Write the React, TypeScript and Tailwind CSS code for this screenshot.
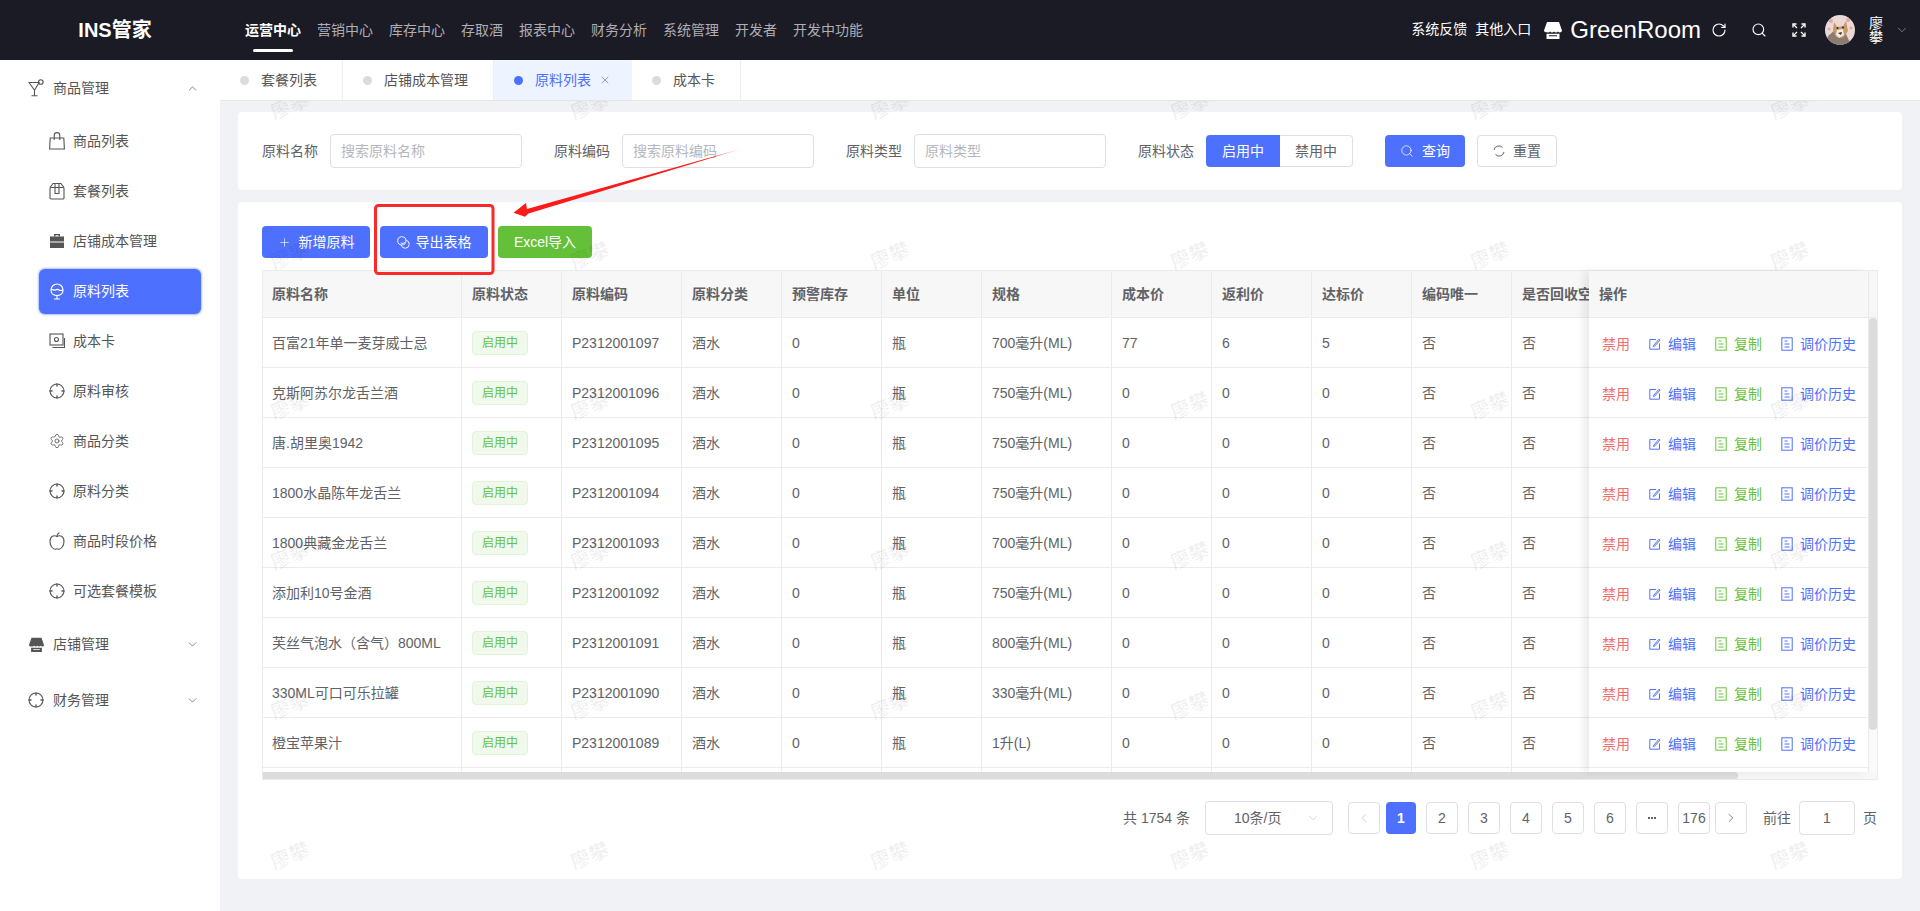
import { ChevronDown, ChevronLeft, ChevronRight, ChevronUp, Plus, RotateCw, Search, Settings, X } from "lucide-react";
import type { ReactNode } from "react";

const FONT = "font-['Liberation_Sans','Noto_Sans_CJK_SC',sans-serif]";

/* ---------- drawn icons ---------- */

function Cocktail({ className = "" }: { className?: string }) {
  return (
    <svg viewBox="0 0 16 18" className={className} fill="none" stroke="currentColor" strokeWidth="1.1">
      <path d="M1 3.5h10L7 10.5h-1z" />
      <path d="M6.5 10.5v6M3.5 16.7h6" />
      <circle cx="12.8" cy="3" r="2.3" />
    </svg>
  );
}

function Bag({ className = "" }: { className?: string }) {
  return (
    <svg viewBox="0 0 16 18" className={className} fill="none" stroke="currentColor" strokeWidth="1.1">
      <path d="M1.2 6h13.6l.6 11H.6z" />
      <path d="M5.2 8V3.4a2.8 2.8 0 0 1 5.6 0V8" />
    </svg>
  );
}

function Box({ className = "" }: { className?: string }) {
  return (
    <svg viewBox="0 0 16 18" className={className} fill="none" stroke="currentColor" strokeWidth="1.1">
      <rect x="1" y="5.5" width="14" height="11.5" rx="1" />
      <path d="M1 5.5 4 1.5h8l3 4M6 1.5v10h4v-10" />
    </svg>
  );
}

function Case({ className = "" }: { className?: string }) {
  return (
    <svg viewBox="0 0 16 16" className={className} fill="currentColor">
      <path d="M5 1h6v2.500H9.600V2.200H6.400v1.300H5z" />
      <rect x="1" y="3.500" width="14" height="5" />
      <rect x="1" y="9.500" width="14" height="5.500" />
    </svg>
  );
}

function Goblet({ className = "" }: { className?: string }) {
  return (
    <svg viewBox="0 0 16 18" className={className} fill="none" stroke="currentColor" strokeWidth="1.2">
      <path d="M2 8a6 6 0 0 1 12 0c0 3.500-2.700 5.500-6 5.500S2 11.500 2 8z" />
      <path d="M2 8c2-1.500 3 1 4.500 0s2-1 3.500 0 2.500.500 4 0" />
      <path d="M8 13.500V17M5 17h6" />
    </svg>
  );
}

function Card({ className = "" }: { className?: string }) {
  return (
    <svg viewBox="0 0 16 16" className={className} fill="none" stroke="currentColor" strokeWidth="1.1">
      <rect x="1" y="1" width="13" height="11" />
      <circle cx="7.500" cy="6.500" r="2" />
      <path d="M3.500 14.500H15.500V5" />
    </svg>
  );
}

function Target({ className = "" }: { className?: string }) {
  return (
    <svg viewBox="0 0 16 16" className={className} fill="none" stroke="currentColor" strokeWidth="1.1">
      <circle cx="8" cy="8" r="7" />
      <path d="M8 .5v3M8 12.500v3M.5 8h3M12.500 8h3" strokeWidth="1.400" />
    </svg>
  );
}

function Apple({ className = "" }: { className?: string }) {
  return (
    <svg viewBox="0 0 16 18" className={className} fill="none" stroke="currentColor" strokeWidth="1.1">
      <path d="M8 4.500C5 2.800 1 4 1 9.500 1 14 4 17.200 6 17.200c1 0 1.300-.4 2-.4s1 .4 2 .4c2 0 5-3.200 5-7.700 0-5.500-4-6.700-7-5z" />
      <path d="M8 4.500C8 3 8.800 1.500 10.500.8" />
    </svg>
  );
}

function Store({ className = "" }: { className?: string }) {
  return (
    <svg viewBox="0 0 18 18" className={className} fill="currentColor">
      <path d="M3 1h12l3 8.500c0 1.300-1.200 2-2.200 2-.8 0-1.500-.4-1.900-1-.4.600-1.100 1-1.900 1s-1.500-.4-2-1c-.5.600-1.200 1-2 1s-1.500-.4-1.900-1c-.4.600-1.100 1-1.900 1C1.200 11.500 0 10.800 0 9.500z" />
      <path d="M2.500 12.800h13V18h-13zM5 14.300v1h8v-1z" fillRule="evenodd" />
    </svg>
  );
}

function EditIcon() {
  return (
    <svg viewBox="0 0 12 12" className="h-[12px] w-[12px] shrink-0" fill="none" stroke="currentColor" strokeWidth="1">
      <path d="M7 1.500H.8v9.700h9.700V5.500" />
      <path d="M4.500 7.500 10 1.200l1 .9-5.300 6-1.400.3z" />
    </svg>
  );
}

function DocIcon() {
  return (
    <svg viewBox="0 0 12 14" className="h-[14px] w-[12px] shrink-0" fill="none" stroke="currentColor" strokeWidth="1">
      <rect x=".8" y=".8" width="10.400" height="12.400" />
      <path d="M3.500 4h3M3.500 7h5M3.500 10h5" />
    </svg>
  );
}

function Expand() {
  return (
    <svg viewBox="0 0 14 14" className="h-[14px] w-[14px]" fill="none" stroke="currentColor" strokeWidth="1.400">
      <path d="M1 4.500V1h3.500M9.500 1H13v3.500M1 9.500V13h3.500M9.500 13H13V9.500" />
      <path d="M1.500 1.500 5 5M12.500 1.500 9 5M1.500 12.500 5 9M12.500 12.500 9 9" strokeWidth="1.200" />
    </svg>
  );
}

function Link2() {
  return (
    <svg viewBox="0 0 14 14" className="h-[13px] w-[13px]" fill="none" stroke="currentColor" strokeWidth="1">
      <circle cx="5.200" cy="5.200" r="4.400" />
      <path d="M4 7.500c1.500 1 3.500.500 4.500-1" />
      <path d="M9.800 4.500a4.400 4.400 0 1 1-5.300 5.300" />
    </svg>
  );
}

function Refresh() {
  return (
    <svg viewBox="0 0 12 12" className="h-[12px] w-[12px]" fill="none" stroke="currentColor" strokeWidth="1">
      <path d="M1 5A5 5 0 0 1 9.500 2.400" />
      <path d="M11 7A5 5 0 0 1 2.500 9.600" />
    </svg>
  );
}

function Avatar() {
  return (
    <svg viewBox="0 0 30 30" className="h-[30px] w-[30px] shrink-0 rounded-full">
      <rect width="30" height="30" fill="#ead9d6" />
      <circle cx="6" cy="6" r="2" fill="#e2a9a4" />
      <circle cx="23" cy="5" r="2" fill="#e2a9a4" />
      <circle cx="26" cy="13" r="1.600" fill="#e2a9a4" />
      <circle cx="4" cy="14" r="1.600" fill="#e2a9a4" />
      <path d="M0 30 3 21 10 15 21 19 26 30z" fill="#8b7b70" />
      <path d="M9 7 12 12 18 11 21 6 23 16 18 23 11 22 8 15z" fill="#c99a66" />
      <path d="M12 15 18 14 19 20 14 23 11 20z" fill="#f4ece2" />
      <circle cx="12.500" cy="13" r="1" fill="#2b2020" />
      <circle cx="18" cy="12.500" r="1" fill="#2b2020" />
      <path d="M13 18 17 17 16 20z" fill="#3a2a2a" />
    </svg>
  );
}

/* ---------- data ---------- */

const NAV = ["营销中心", "库存中心", "存取酒", "报表中心", "财务分析", "系统管理", "开发者", "开发中功能"];

const MENU: { label: string; icon: ReactNode; active?: boolean }[] = [
  { label: "商品列表", icon: <Bag className="h-[18px] w-[16px]" /> },
  { label: "套餐列表", icon: <Box className="h-[18px] w-[16px]" /> },
  { label: "店铺成本管理", icon: <Case className="h-[16px] w-[16px]" /> },
  { label: "原料列表", icon: <Goblet className="h-[18px] w-[16px]" />, active: true },
  { label: "成本卡", icon: <Card className="h-[16px] w-[16px]" /> },
  { label: "原料审核", icon: <Target className="h-[16px] w-[16px]" /> },
  { label: "商品分类", icon: <Settings size={18} strokeWidth={1.2} /> },
  { label: "原料分类", icon: <Target className="h-[16px] w-[16px]" /> },
  { label: "商品时段价格", icon: <Apple className="h-[18px] w-[16px]" /> },
  { label: "可选套餐模板", icon: <Target className="h-[16px] w-[16px]" /> },
];

const HEADERS = ["原料名称", "原料状态", "原料编码", "原料分类", "预警库存", "单位", "规格", "成本价", "返利价", "达标价", "编码唯一", "是否回收空瓶"];

const ROWS = [
  ["百富21年单一麦芽威士忌", "P2312001097", "700毫升(ML)", "77", "6", "5"],
  ["克斯阿苏尔龙舌兰酒", "P2312001096", "750毫升(ML)", "0", "0", "0"],
  ["唐.胡里奥1942", "P2312001095", "750毫升(ML)", "0", "0", "0"],
  ["1800水晶陈年龙舌兰", "P2312001094", "750毫升(ML)", "0", "0", "0"],
  ["1800典藏金龙舌兰", "P2312001093", "700毫升(ML)", "0", "0", "0"],
  ["添加利10号金酒", "P2312001092", "750毫升(ML)", "0", "0", "0"],
  ["芙丝气泡水（含气）800ML", "P2312001091", "800毫升(ML)", "0", "0", "0"],
  ["330ML可口可乐拉罐", "P2312001090", "330毫升(ML)", "0", "0", "0"],
  ["橙宝苹果汁", "P2312001089", "1升(L)", "0", "0", "0"],
];

const GRID = "grid w-[1669px] grid-cols-[199px_100px_120px_100px_100px_100px_130px_100px_100px_100px_100px_120px]";
const CELL = "flex items-center whitespace-nowrap border-r border-b border-[#ebebeb] px-[10px] first:pl-[9px]";

/* ---------- parts ---------- */

function Header() {
  return (
    <header className="flex h-[60px] shrink-0 items-center bg-[#1a1b25] text-sm">
      <div className="w-[230px] shrink-0 text-center text-[20px] font-bold text-white">INS管家</div>
      <nav className="ml-[15px] flex h-full items-center gap-4 text-[#aeaeb4]">
        <div className="relative flex h-full items-center font-bold text-white">
          运营中心
          <span className="absolute bottom-[8px] left-[8px] h-[3px] w-[40px] rounded-full bg-white" />
        </div>
        {NAV.map((n) => (
          <div key={n}>{n}</div>
        ))}
      </nav>
      <div className="ml-auto flex items-center pr-[11px] text-white">
        <span className="-mt-[2px]">系统反馈</span>
        <span className="-mt-[2px] ml-2">其他入口</span>
        <Store className="ml-[13px] h-[18px] w-[18px]" />
        <span className="ml-[8px] text-[24px] leading-none">GreenRoom</span>
        <RotateCw className="ml-[10px]" size={16} strokeWidth={1.7} />
        <Search className="ml-[24px]" size={16} strokeWidth={1.7} />
        <div className="ml-[25px]">
          <Expand />
        </div>
        <div className="ml-[19px]">
          <Avatar />
        </div>
        <div className="ml-[14px] w-[14px] text-sm leading-[14px]">廖攀</div>
        <ChevronDown className="ml-[12px] text-[#8c8c94]" size={14} strokeWidth={1.4} />
      </div>
    </header>
  );
}

function GroupTitle({ icon, label, open }: { icon: ReactNode; label: string; open?: boolean }) {
  return (
    <div className="flex h-[56px] items-center pl-[28px] pr-[21px] text-sm text-[#555]">
      <span className="flex w-[16px] justify-center">{icon}</span>
      <span className="ml-[9px] flex-1">{label}</span>
      {open ? <ChevronUp size={13} strokeWidth={1.3} /> : <ChevronDown size={13} strokeWidth={1.3} />}
    </div>
  );
}

function Sidebar() {
  return (
    <aside className="w-[220px] shrink-0 bg-white text-[#555]">
      <GroupTitle icon={<Cocktail className="h-[18px] w-[16px]" />} label="商品管理" open />
      {MENU.map((m) => (
        <div key={m.label} className="flex h-[50px] items-center pl-[39px]">
          <div
            className={
              m.active
                ? "flex h-[45px] w-[162px] items-center rounded-md bg-[#4e70ff] pl-[10px] text-sm text-white shadow-[0_0_2px_1px_rgba(78,112,255,0.45)]"
                : "flex h-[45px] w-[162px] items-center pl-[10px] text-sm"
            }
          >
            <span className="flex w-[16px] justify-center">{m.icon}</span>
            <span className="ml-[8px]">{m.label}</span>
          </div>
        </div>
      ))}
      <GroupTitle icon={<Store className="h-[15px] w-[15px]" />} label="店铺管理" />
      <GroupTitle icon={<Target className="h-[16px] w-[16px]" />} label="财务管理" />
    </aside>
  );
}

function TabDot({ on }: { on?: boolean }) {
  return <span className={on ? "h-[9px] w-[9px] rounded-full bg-[#4e70ff]" : "h-[9px] w-[9px] rounded-full bg-[#dcdcdc]"} />;
}

function Tabs() {
  return (
    <div className="flex h-[41px] shrink-0 border-b border-[#e6e6e6] bg-white text-sm text-[#555]">
      <div className="flex items-center gap-3 border-r border-[#eee] pl-5 pr-[25px]">
        <TabDot />
        套餐列表
      </div>
      <div className="flex items-center gap-3 border-r border-[#eee] pl-5 pr-[25px]">
        <TabDot />
        店铺成本管理
      </div>
      <div className="flex items-center bg-[#edf4ff] pl-5 pr-[21px] text-[#4e70ff]">
        <TabDot on />
        <span className="ml-3">原料列表</span>
        <X className="ml-[8px]" size={12} strokeWidth={1.4} />
      </div>
      <div className="flex items-center gap-3 border-r border-[#eee] pl-5 pr-[25px]">
        <TabDot />
        成本卡
      </div>
    </div>
  );
}

function Field({ label, placeholder }: { label: string; placeholder: string }) {
  return (
    <>
      <span className="w-[56px] shrink-0 whitespace-nowrap text-[#606266]">{label}</span>
      <input
        readOnly
        placeholder={placeholder}
        className="ml-3 mr-8 h-[34px] w-[192px] rounded border border-[#dcdfe6] bg-white px-[10px] text-sm outline-none placeholder:text-[#b4b7bd]"
      />
    </>
  );
}

function FilterPanel() {
  return (
    <section className="flex h-[78px] items-center rounded-sm bg-white px-6 text-sm">
      <Field label="原料名称" placeholder="搜索原料名称" />
      <Field label="原料编码" placeholder="搜索原料编码" />
      <Field label="原料类型" placeholder="原料类型" />
      <span className="w-[56px] shrink-0 whitespace-nowrap text-[#606266]">原料状态</span>
      <div className="ml-3 flex h-[32px] w-[147px]">
        <div className="flex w-[74px] items-center justify-center rounded-l bg-[#4e70ff] text-white">启用中</div>
        <div className="flex flex-1 items-center justify-center rounded-r border border-l-0 border-[#dcdfe6] text-[#606266]">禁用中</div>
      </div>
      <button className="ml-8 flex h-[32px] w-[80px] items-center justify-center gap-2 rounded-sm bg-[#4e70ff] text-white">
        <Search size={14} strokeWidth={1.3} />
        查询
      </button>
      <button className="ml-3 flex h-[32px] w-[80px] items-center justify-center gap-2 rounded-sm border border-[#dcdfe6] text-[#606266]">
        <Refresh />
        重置
      </button>
    </section>
  );
}

function DataTable() {
  return (
    <div className="mt-3 flex h-[510px] flex-col border border-[#ebebeb] text-sm text-[#606266]">
      <div className="flex min-h-0 flex-1">
        <div className="w-[1326px] shrink-0 overflow-hidden">
          <div className={`${GRID} h-[47px] bg-[#f7f7f8] font-bold`}>
            {HEADERS.map((h) => (
              <div key={h} className={CELL}>
                {h}
              </div>
            ))}
          </div>
          {ROWS.map((r) => (
            <div key={r[1]} className={`${GRID} h-[50px] bg-white`}>
              <div className={CELL}>{r[0]}</div>
              <div className={CELL}>
                <span className="inline-flex h-[24px] w-[56px] items-center justify-center rounded border border-[#e1f3d8] bg-[#f0f9eb] text-xs text-[#67c23a]">
                  启用中
                </span>
              </div>
              <div className={CELL}>{r[1]}</div>
              <div className={CELL}>酒水</div>
              <div className={CELL}>0</div>
              <div className={CELL}>瓶</div>
              <div className={CELL}>{r[2]}</div>
              <div className={CELL}>{r[3]}</div>
              <div className={CELL}>{r[4]}</div>
              <div className={CELL}>{r[5]}</div>
              <div className={CELL}>否</div>
              <div className={CELL}>否</div>
            </div>
          ))}
          <div className={`${GRID} h-[50px] bg-white`}>
            {HEADERS.map((h) => (
              <div key={h} className={CELL} />
            ))}
          </div>
        </div>
        <div className="relative w-[279px] shrink-0 overflow-hidden bg-white shadow-[-5px_0_8px_rgba(0,0,0,0.08)]">
          <div className="flex h-[47px] items-center border-b border-[#ebebeb] bg-[#f7f7f8] pl-[10px] font-bold">操作</div>
          {ROWS.map((r) => (
            <div key={r[1]} className="flex h-[50px] items-center gap-[19px] border-b border-[#ebebeb] pl-[13px] pt-[3px]">
              <span className="text-[#f56c6c]">禁用</span>
              <span className="flex items-center gap-[7px] text-[#4e70ff]">
                <EditIcon />
                编辑
              </span>
              <span className="flex items-center gap-[7px] text-[#67c23a]">
                <DocIcon />
                复制
              </span>
              <span className="flex items-center gap-[7px] text-[#4e70ff]">
                <DocIcon />
                调价历史
              </span>
            </div>
          ))}
        </div>
        <div className="flex w-[9px] shrink-0 flex-col border-l border-[#ebebeb] bg-[#fafafa]">
          <div className="h-[47px] shrink-0 border-b border-[#ebebeb] bg-[#f7f7f8]" />
          <div className="h-[412px] rounded-full bg-[#dcdcdc]" />
        </div>
      </div>
      <div className="h-[7px] shrink-0 bg-[#f7f7f7]">
        <div className="h-full w-[1475px] rounded-r-full bg-[#dcdcdc]" />
      </div>
    </div>
  );
}

function PageBtn({ children, active }: { children: ReactNode; active?: boolean }) {
  return (
    <div
      className={
        active
          ? "flex h-[32px] w-[30px] items-center justify-center rounded bg-[#4e70ff] font-bold text-white"
          : "flex h-[32px] w-[32px] items-center justify-center rounded border border-[#dcdfe6] text-[#606266]"
      }
    >
      {children}
    </div>
  );
}

function Pagination() {
  return (
    <div className="mt-[21px] flex items-center justify-end text-sm text-[#606266]">
      <span className="mr-[15px]">共 1754 条</span>
      <div className="mr-[15px] flex h-[34px] w-[128px] items-center rounded border border-[#dcdfe6] pl-[28px]">
        <span className="flex-1">10条/页</span>
        <ChevronDown className="mr-[12px] text-[#c0c4cc]" size={14} strokeWidth={1.2} />
      </div>
      <PageBtn>
        <ChevronLeft className="text-[#c0c4cc]" size={14} strokeWidth={1.3} />
      </PageBtn>
      <div className="ml-[6px] flex gap-[10px]">
        <PageBtn active>1</PageBtn>
        <PageBtn>2</PageBtn>
        <PageBtn>3</PageBtn>
        <PageBtn>4</PageBtn>
        <PageBtn>5</PageBtn>
        <PageBtn>6</PageBtn>
        <PageBtn>
          <span className="flex gap-[1px]">
            <span className="h-[2px] w-[2px] bg-[#606266]" />
            <span className="h-[2px] w-[2px] bg-[#606266]" />
            <span className="h-[2px] w-[2px] bg-[#606266]" />
          </span>
        </PageBtn>
        <PageBtn>176</PageBtn>
      </div>
      <div className="ml-[5px]">
        <PageBtn>
          <ChevronRight size={14} strokeWidth={1.3} />
        </PageBtn>
      </div>
      <span className="ml-4">前往</span>
      <div className="ml-2 flex h-[34px] w-[56px] items-center justify-center rounded border border-[#dcdfe6]">1</div>
      <span className="ml-2 mr-[1px]">页</span>
    </div>
  );
}

function Watermarks() {
  const cells = Array.from({ length: 36 }, (_, i) => i);
  return (
    <div className="pointer-events-none absolute inset-0 overflow-hidden">
      <div className="absolute left-[-80px] top-[-70px] grid grid-cols-[repeat(6,300px)] auto-rows-[150px]">
        {cells.map((i) => (
          <div key={i} className="flex items-center justify-center">
            <span className="rotate-[-22deg] text-[20px] font-bold text-black/[0.06]">廖攀</span>
          </div>
        ))}
      </div>
    </div>
  );
}

function Annotation() {
  return (
    <svg className="pointer-events-none absolute left-0 top-0" width="1920" height="911" viewBox="0 0 1920 911">
      <defs>
        <linearGradient id="tail" gradientUnits="userSpaceOnUse" x1="744" y1="148" x2="712" y2="157">
          <stop offset="0" stopColor="#ff1a1a" stopOpacity="0.1" />
          <stop offset="1" stopColor="#ff1a1a" />
        </linearGradient>
      </defs>
      <rect x="375.500" y="205.500" width="117.500" height="68" rx="3" fill="none" stroke="#fb2a2a" strokeWidth="3" />
      <path d="M744 148 527 209 526 203 513.500 212.700 525 216.800 528.500 213.500z" fill="url(#tail)" />
    </svg>
  );
}

export default function App() {
  return (
    <div className={`${FONT} relative flex h-[911px] w-[1920px] flex-col overflow-hidden bg-[#f0f2f5]`}>
      <Header />
      <div className="flex min-h-0 flex-1">
        <Sidebar />
        <main className="flex min-w-0 flex-1 flex-col">
          <Tabs />
          <div className="relative min-h-0 flex-1 px-[18px] pt-[11px]">
            <FilterPanel />
            <section className="mt-3 h-[677px] rounded-sm bg-white px-6 pt-6">
              <div className="flex gap-[10px] text-sm text-white">
                <button className="flex h-[32px] w-[108px] items-center justify-center gap-2 rounded-sm bg-[#4e70ff]">
                  <Plus size={13} strokeWidth={1.2} />
                  新增原料
                </button>
                <button className="flex h-[32px] w-[108px] items-center justify-center gap-[6px] rounded-sm bg-[#4e70ff]">
                  <Link2 />
                  导出表格
                </button>
                <button className="flex h-[32px] w-[94px] items-center justify-center rounded-sm bg-[#64bf39]">Excel导入</button>
              </div>
              <DataTable />
              <Pagination />
            </section>
            <Watermarks />
          </div>
        </main>
      </div>
      <Annotation />
    </div>
  );
}
